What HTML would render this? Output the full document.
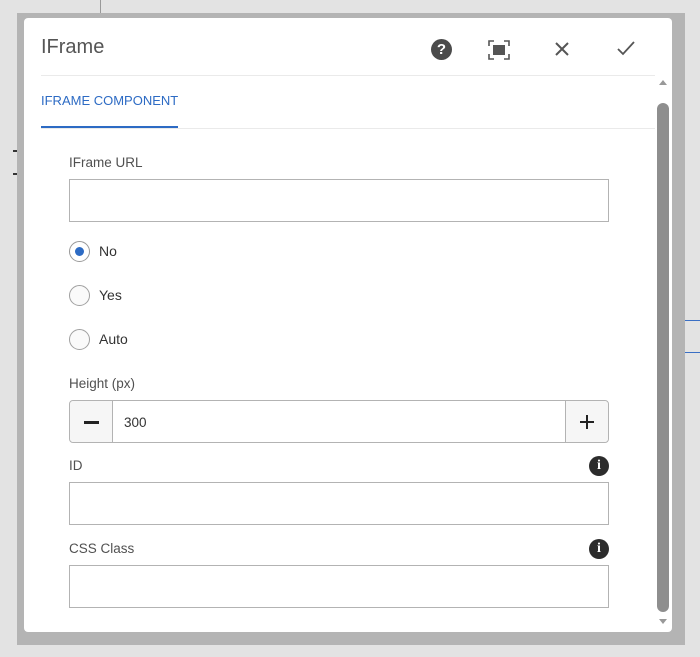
<!DOCTYPE html>
<html><head><style>
*{margin:0;padding:0;box-sizing:border-box}
body{width:700px;height:657px;background:#e3e3e3;position:relative;overflow:hidden;font-family:"Liberation Sans",sans-serif;color:#4b4b4b}
.frame{position:absolute;left:17px;top:13px;width:668px;height:632px;background:#b4b4b4}
.dlg{position:absolute;left:24px;top:18px;width:648px;height:614px;background:#fff;border-radius:4px}
.a{position:absolute}
.inp{position:absolute;left:69px;width:540px;height:43px;border:1px solid #b3b3b3;background:#fff}
.lbl{position:absolute;left:69px;font-size:13.5px;color:#505050}
.radio{position:absolute;left:69px;width:21px;height:21px;border:1px solid #a0a0a0;border-radius:50%;background:#fafafa}
.rl{position:absolute;left:99px;font-size:14px;color:#333}
.info{position:absolute;left:589px;width:20px;height:20px;border-radius:50%;background:#2c2c2c;color:#fff;font:bold 14px "Liberation Serif",serif;text-align:center;line-height:20px}
</style></head><body>
<div class="a" style="left:100px;top:0;width:1px;height:14px;background:#999"></div>
<div class="a" style="left:13px;top:150px;width:4px;height:2px;background:#333"></div>
<div class="a" style="left:13px;top:173px;width:4px;height:2px;background:#333"></div>
<div class="a" style="left:685px;top:320px;width:15px;height:1px;background:#3a6fc4"></div>
<div class="a" style="left:685px;top:352px;width:15px;height:1px;background:#3a6fc4"></div>
<div class="frame"></div>
<div class="dlg"></div>
<div class="a" style="left:41px;top:36px;font-size:20px;color:#555">IFrame</div>
<div class="a" style="left:431px;top:39px;width:21px;height:21px;border-radius:50%;background:#4b4b4b;color:#fff;font:bold 15px 'Liberation Sans';text-align:center;line-height:21px">?</div>
<svg class="a" style="left:488px;top:40px" width="22" height="20" viewBox="0 0 22 20" fill="none" stroke="#555" stroke-width="1.6"><path d="M1 6V1h5M16 1h5v5M21 14v5h-5M6 19H1v-5"/><rect x="5" y="5" width="12" height="10" fill="#555" stroke="none"/></svg>
<svg class="a" style="left:554px;top:41px" width="16" height="16" stroke="#555" stroke-width="2"><path d="M2 2L14 14M14 2L2 14"/></svg>
<svg class="a" style="left:617px;top:40px" width="18" height="16" fill="none" stroke="#555" stroke-width="1.8"><path d="M1 9l5 5L17 2"/></svg>
<div class="a" style="left:41px;top:75px;width:614px;height:1px;background:#eaeaea"></div>
<div class="a" style="left:41px;top:93px;font-size:13px;color:#2d6bc4">IFRAME COMPONENT</div>
<div class="a" style="left:41px;top:126px;width:137px;height:3px;background:#2d6bc4"></div>
<div class="a" style="left:41px;top:128px;width:614px;height:1px;background:#eaeaea"></div>
<div class="a" style="left:657px;top:103px;width:12px;height:509px;background:#8e8e8e;border-radius:6px"></div>
<div class="a" style="left:659px;top:80px;border:4px solid transparent;border-bottom:5px solid #999;border-top:0;width:0"></div>
<div class="a" style="left:659px;top:619px;border:4px solid transparent;border-top:5px solid #999;border-bottom:0;width:0"></div>
<div class="lbl" style="top:155px">IFrame URL</div>
<div class="inp" style="top:179px"></div>
<div class="radio" style="top:241px;border-color:#999;background:#fff"><div style="position:absolute;left:5px;top:5px;width:9px;height:9px;border-radius:50%;background:#2d6bc4"></div></div>
<div class="rl" style="top:243px">No</div>
<div class="radio" style="top:285px"></div>
<div class="rl" style="top:287px">Yes</div>
<div class="radio" style="top:329px"></div>
<div class="rl" style="top:331px">Auto</div>
<div class="lbl" style="top:376px">Height (px)</div>
<div class="inp" style="top:400px;border-radius:4px;background:#fff"></div>
<div class="a" style="left:70px;top:401px;width:43px;height:41px;background:#f6f6f6;border-right:1px solid #b3b3b3;border-radius:4px 0 0 4px"></div>
<div class="a" style="left:84px;top:421px;width:15px;height:3px;background:#222"></div>
<div class="a" style="left:565px;top:401px;width:43px;height:41px;background:#f6f6f6;border-left:1px solid #b3b3b3;border-radius:0 4px 4px 0"></div>
<div class="a" style="left:580px;top:421px;width:14px;height:2px;background:#222"></div>
<div class="a" style="left:586px;top:415px;width:2px;height:14px;background:#222"></div>
<div class="a" style="left:124px;top:415px;font-size:13.5px;color:#333">300</div>
<div class="lbl" style="top:458px">ID</div>
<div class="info" style="top:456px">i</div>
<div class="inp" style="top:482px"></div>
<div class="lbl" style="top:541px">CSS Class</div>
<div class="info" style="top:539px">i</div>
<div class="inp" style="top:565px"></div>
</body></html>
